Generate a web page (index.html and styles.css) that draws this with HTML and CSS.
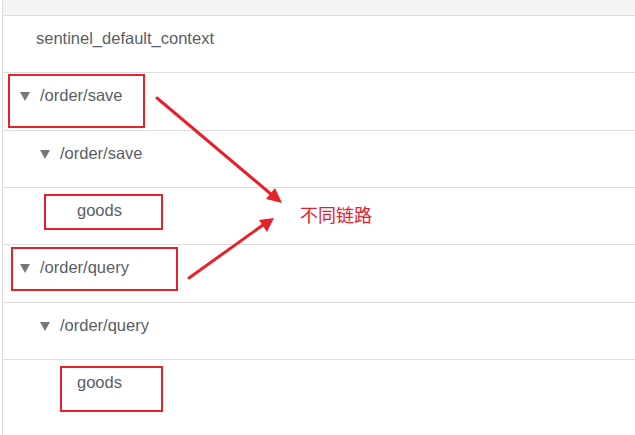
FILE: index.html
```html
<!DOCTYPE html>
<html lang="zh-CN">
<head>
<meta charset="utf-8">
<title>Sentinel 链路</title>
<link rel="stylesheet" href="styles.css">
</head>
<body>
<div class="panel">
  <div class="header"></div>
  <div class="row lvl0-leaf"><span class="label">sentinel_default_context</span></div>
  <div class="row lvl0"><span class="caret"></span><span class="label">/order/save</span></div>
  <div class="row lvl1"><span class="caret"></span><span class="label">/order/save</span></div>
  <div class="row lvl2-leaf"><span class="label">goods</span></div>
  <div class="row lvl0"><span class="caret"></span><span class="label">/order/query</span></div>
  <div class="row lvl1"><span class="caret"></span><span class="label">/order/query</span></div>
  <div class="row lvl2-leaf"><span class="label">goods</span></div>
</div>

<div class="mark mark-save"></div>
<div class="mark mark-goods1"></div>
<div class="mark mark-query"></div>
<div class="mark mark-goods2"></div>

<svg class="arrows" width="635" height="435" viewBox="0 0 635 435" aria-hidden="true">
  <line x1="157" y1="98" x2="272" y2="195" stroke="#e8202a" stroke-width="3" stroke-linecap="round"/>
  <polygon points="282,203 266,199 275,188" fill="#e8202a"/>
  <line x1="189" y1="278" x2="263" y2="225" stroke="#e8202a" stroke-width="3" stroke-linecap="round"/>
  <polygon points="274,218 267,232 259,220" fill="#e8202a"/>
</svg>

<div class="note">不同链路</div>
</body>
</html>
```

FILE: styles.css
```css
html, body {
  margin: 0;
  padding: 0;
  background: #ffffff;
}

body {
  width: 635px;
  height: 435px;
  overflow: hidden;
  position: relative;
  font-family: "Liberation Sans", Arial, sans-serif;
}

.panel {
  margin-left: 2px;
  border-left: 1px solid #dcdcdc;
  height: 435px;
}

.header {
  height: 15px;
  background: #f3f4f6;
  border-bottom: 1px solid #dcdcdc;
}

.row {
  box-sizing: border-box;
  height: 57.33px;
  border-bottom: 1px solid #dedede;
  padding-top: 11px;
  display: flex;
  align-items: flex-start;
  font-size: 16.5px;
  line-height: 22px;
  color: #5a5e66;
}

.row:last-child {
  border-bottom: none;
}

.lvl0-leaf { padding-left: 33px; }
.lvl0 { padding-left: 17px; }
.lvl1 { padding-left: 37px; }
.lvl2-leaf { padding-left: 74px; }

.caret {
  width: 0;
  height: 0;
  border-left: 5.5px solid transparent;
  border-right: 5.5px solid transparent;
  border-top: 9px solid #777777;
  margin-top: 8px;
  margin-right: 10px;
  flex: none;
}

.label {
  white-space: nowrap;
}

.mark {
  position: absolute;
  box-sizing: border-box;
  border: 2px solid #e8202a;
}

.mark-save   { left: 8px;  top: 74px;  width: 137px; height: 54px; }
.mark-goods1 { left: 44px; top: 194px; width: 119px; height: 36px; }
.mark-query  { left: 11px; top: 247px; width: 167px; height: 44px; }
.mark-goods2 { left: 60px; top: 366px; width: 103px; height: 46px; }

.arrows {
  position: absolute;
  left: 0;
  top: 0;
}

.note {
  position: absolute;
  left: 300px;
  top: 203px;
  font-family: "Noto Sans CJK SC", sans-serif;
  font-size: 18px;
  line-height: 22px;
  color: #e8202a;
}
```
